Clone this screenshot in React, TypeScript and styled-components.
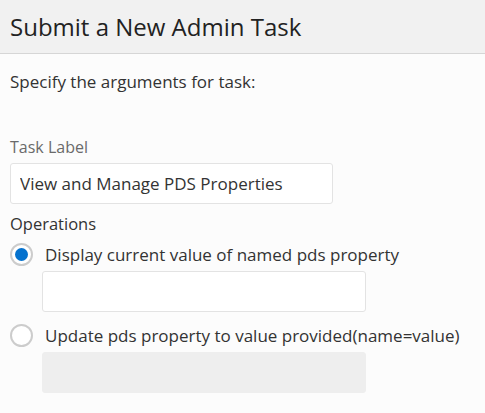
import styled, { createGlobalStyle } from "styled-components";

const GlobalStyle = createGlobalStyle`
  html, body {
    margin: 0;
    padding: 0;
    background: #fcfcfc;
  }
  body {
    font-family: "Open Sans", "Noto Sans", sans-serif;
    color: #333;
  }
`;

const Page = styled.div`
  width: 485px;
  height: 413px;
  overflow: hidden;
  background: #fcfcfc;
`;

const Header = styled.div`
  height: 54px;
  background: #f1f1f1;
  border-bottom: 1px solid #d6d6d6;
  display: flex;
  align-items: center;
  padding: 0 10px;
  box-sizing: border-box;
`;

const Title = styled.h1`
  margin: 0;
  font-size: 24px;
  font-weight: 400;
  color: #222;
`;

const Body = styled.div`
  padding: 0 10px;
  display: flex;
  flex-direction: column;
`;

const Intro = styled.p`
  margin: 17px 0 0;
  font-size: 17px;
  line-height: 22px;
  color: #333;
`;

const FieldLabel = styled.label`
  margin-top: 44px;
  font-size: 16px;
  line-height: 20px;
  color: #6a6a6a;
`;

const TextBox = styled.input<{ $width: number; $gap?: number }>`
  box-sizing: border-box;
  width: ${(p) => p.$width}px;
  height: 41px;
  margin-top: ${(p) => p.$gap ?? 6}px;
  padding: 0 9px;
  border: 1px solid #e3e3e3;
  border-radius: 3px;
  background: #fff;
  font-family: inherit;
  font-size: 17px;
  color: #333;
  outline: none;

  &:disabled {
    background: #eeeeee;
    border-color: #eeeeee;
  }
`;

const GroupLabel = styled.div`
  margin-top: 10px;
  font-size: 16.5px;
  line-height: 20px;
  color: #333;
`;

const Option = styled.label<{ $gap: number }>`
  display: flex;
  align-items: center;
  gap: 12px;
  margin-top: ${(p) => p.$gap}px;
  font-size: 17px;
  line-height: 22px;
  color: #333;
`;

const Radio = styled.span<{ $checked?: boolean }>`
  box-sizing: border-box;
  width: 23px;
  height: 23px;
  border-radius: 50%;
  border: 2px solid #cccccc;
  background: #fff;
  display: flex;
  align-items: center;
  justify-content: center;
  flex-shrink: 0;

  &::after {
    content: "";
    width: 13px;
    height: 13px;
    border-radius: 50%;
    background: ${(p) => (p.$checked ? "#0572ce" : "transparent")};
  }
`;

const Indented = styled.div`
  padding-left: 32px;
`;

export default function App() {
  return (
    <Page>
      <GlobalStyle />
      <Header>
        <Title>Submit a New Admin Task</Title>
      </Header>
      <Body>
        <Intro>Specify the arguments for task:</Intro>
        <FieldLabel>Task Label</FieldLabel>
        <TextBox $width={323} defaultValue="View and Manage PDS Properties" />
        <GroupLabel>Operations</GroupLabel>
        <Option $gap={9}>
          <Radio $checked />
          Display current value of named pds property
        </Option>
        <Indented>
          <TextBox $width={324} $gap={5} />
        </Indented>
        <Option $gap={12}>
          <Radio />
          Update pds property to value provided(name=value)
        </Option>
        <Indented>
          <TextBox $width={324} $gap={5} disabled />
        </Indented>
      </Body>
    </Page>
  );
}
